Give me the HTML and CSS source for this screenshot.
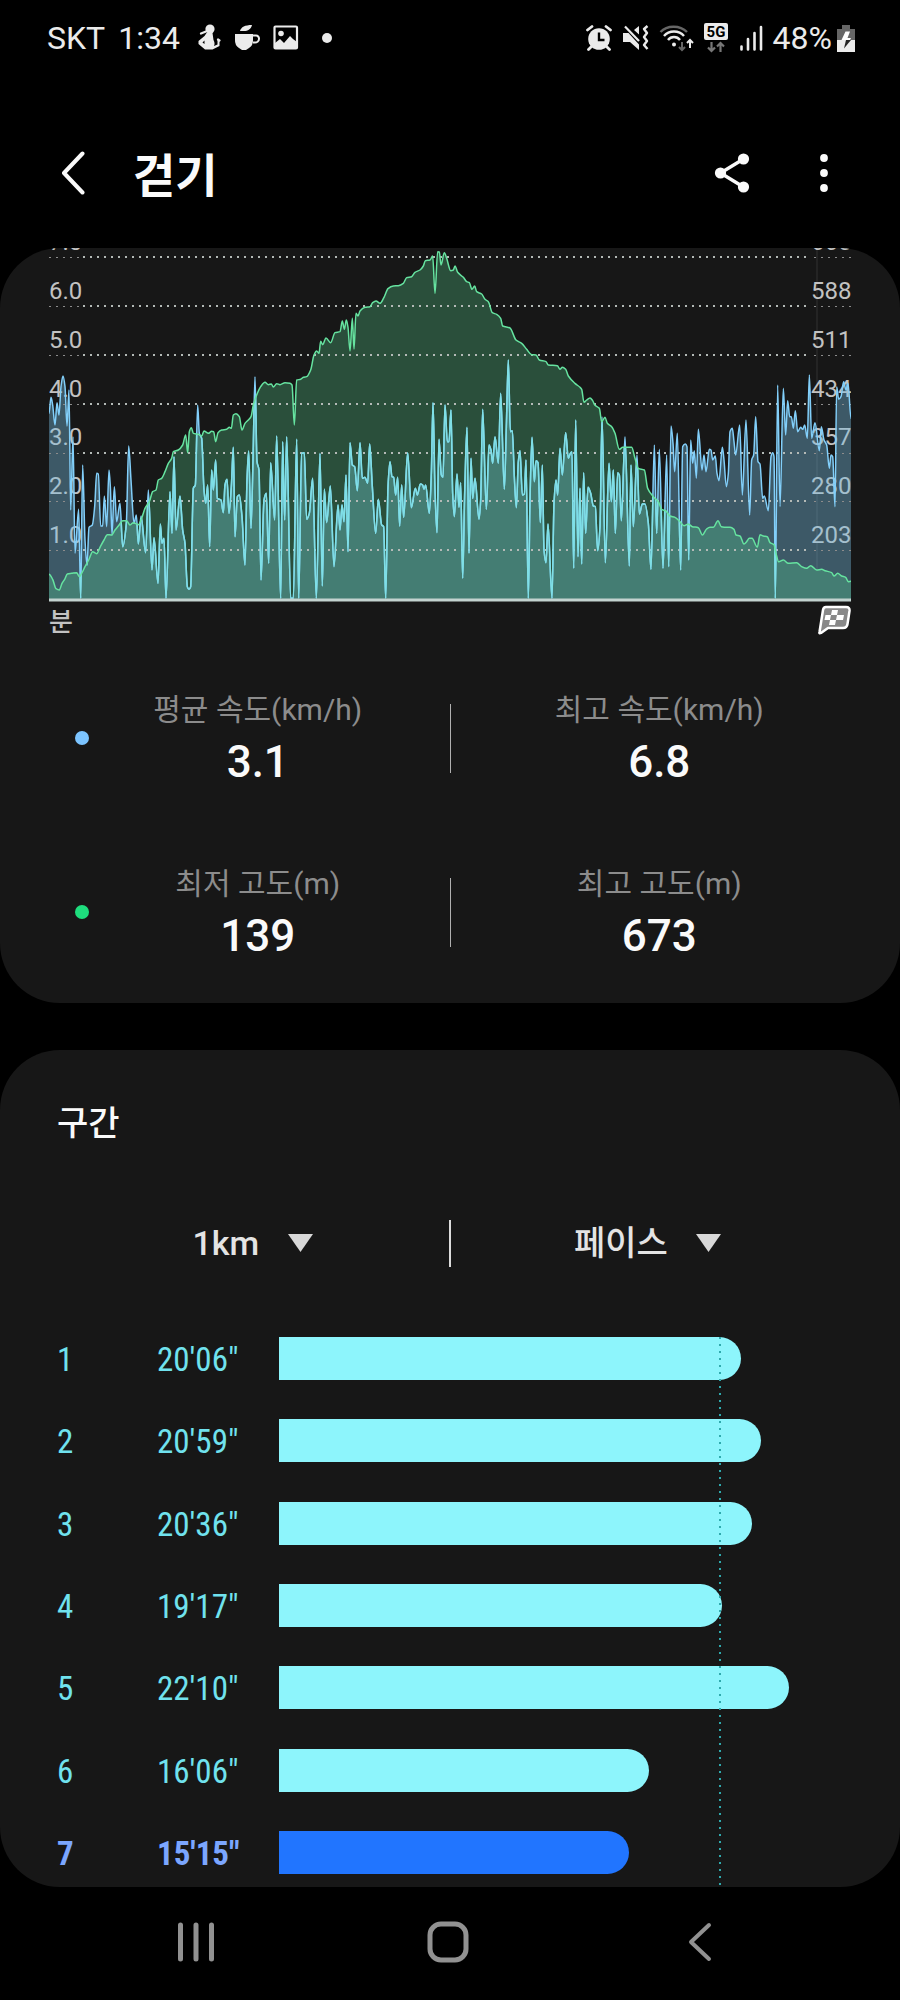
FILE: index.html
```html
<!DOCTYPE html>
<html lang="ko">
<head>
<meta charset="utf-8">
<meta name="viewport" content="width=device-width, initial-scale=1">
<title>걷기</title>
<link rel="stylesheet" href="styles.css">
</head>
<body>
<div class="status-bar">
  <div class="status-group status-left">
    <span>SKT</span>
    <span class="clock">1:34</span>
    <svg class="status-icon figure" viewBox="0 0 24 28" width="24" height="28" aria-hidden="true">
      <circle cx="13" cy="5" r="4.6" fill="currentColor"/>
      <path d="M9.500 9h6l1 7c1 2 1.500 4 .5 6l3.500-1.500V16h2v6l-7 3.500H8L1.500 20v-3l6-5z" fill="currentColor"/>
      <path d="M4 9.500 9 7.500M21 15.500l1.500 1" stroke="currentColor" stroke-width="2.200" stroke-linecap="round"/>
      <path d="M5.500 18.500l2-2v3.500z" fill="#000"/>
    </svg>
    <svg class="status-icon cup" viewBox="0 0 26 26" width="26" height="26" aria-hidden="true">
      <path d="M1 9h18v6a9 9 0 0 1-4 8l-3 2H8l-3-2a9 9 0 0 1-4-8zM6 6c1-4 5-6 12-6-1 4-4 6-8 6z" fill="currentColor"/>
      <path d="M18 10.500h4a3 3 0 0 1 3 3.200c0 2.300-2 3.800-4 3.800h-2" fill="none" stroke="currentColor" stroke-width="2"/>
    </svg>
    <svg class="status-icon photo" viewBox="0 0 26 26" width="26" height="26" aria-hidden="true">
      <rect x="1.500" y="1.500" width="22.500" height="22" rx="1" fill="none" stroke="currentColor" stroke-width="2.200"/>
      <circle cx="8" cy="8.500" r="2.800" fill="currentColor"/>
      <path d="M2 18l5-4 4 4 6-7 3 3 4 3v6H2z" fill="currentColor"/>
    </svg>
    <span class="more-dot"></span>
  </div>
  <div class="status-group">
    <svg class="status-icon" viewBox="0 0 26 26" width="26" height="26" aria-hidden="true">
      <circle cx="13" cy="14" r="10.800" fill="currentColor"/>
      <path d="M1.500 5 6 1.500M20 1.500 24.500 5M6 21l-3.500 3.500M20 21l3.500 3.500" stroke="currentColor" stroke-width="2.800" stroke-linecap="round"/>
      <path d="M13 7.500V15h5.500" fill="none" stroke="#000" stroke-width="2.400"/>
    </svg>
    <svg class="status-icon" viewBox="0 0 27 26" width="27" height="26" aria-hidden="true">
      <path d="M1 8h5.500L17 19.500V25L8 17H1zM12 5l5-4v8.500z" fill="currentColor"/>
      <path d="M3 1.500 17 16" stroke="currentColor" stroke-width="2.200"/>
      <path d="M25.500 1l-3.500 3 3 4-3 4 3 4-3 4 3.500 4" fill="none" stroke="currentColor" stroke-width="2.400" stroke-linejoin="round"/>
    </svg>
    <svg class="status-icon" viewBox="0 0 35 28" width="35" height="28" aria-hidden="true">
      <path d="M1.500 8C8 1 21 1 28 8" fill="none" stroke="#666" stroke-width="2.400"/>
      <path d="M5 12c5-6 15-6 20 0M9 16c3-4 9-4 12 0" fill="none" stroke="currentColor" stroke-width="2.400"/>
      <circle cx="15" cy="20.500" r="2" fill="currentColor"/>
      <path d="M23 18v8m-3-3 3 3 3-3" fill="none" stroke="#666" stroke-width="2"/>
      <path d="M31 24v-8m-3 3 3-3 3 3" fill="none" stroke="currentColor" stroke-width="2"/>
    </svg>
    <svg class="status-icon" viewBox="0 0 25 30" width="25" height="30" aria-hidden="true">
      <rect x="0" y="0" width="24" height="17" rx="2" fill="currentColor"/>
      <text x="12" y="14" class="network-text" text-anchor="middle">5G</text>
      <path d="M7.500 19v9m-3.500-3.500 3.500 3.500 3.500-3.500M16.500 29v-9m-3.500 3.500 3.500-3.500 3.500 3.500" fill="none" stroke="#777" stroke-width="2.200"/>
    </svg>
    <svg class="status-icon" viewBox="0 0 24 26" width="24" height="26" aria-hidden="true">
      <path d="M2.500 24.500v-3M9 24.500V14M15.500 24.500V8M22 24.500V2" stroke="currentColor" stroke-width="2.600" stroke-linecap="round"/>
    </svg>
    <span class="battery-level">48%</span>
    <svg class="status-icon battery" viewBox="0 0 18 27" width="18" height="27" aria-hidden="true">
      <path d="M5 0h8v4h5v12H0V4h5z" fill="#666"/>
      <path d="M0 15h18v12H0z" fill="currentColor"/>
      <path d="M8.500 6.500H13L10.500 13H14l-1 2H4.500z" fill="#fff"/>
      <path d="M9 15h5L7 23.500z" fill="#222"/>
    </svg>
  </div>
</div>

<header class="app-bar">
  <button class="icon-button" aria-label="뒤로">
    <svg viewBox="0 0 24 44" width="24" height="44"><path d="M21.500 2.500 3 22l18.500 19.500" fill="none" stroke="#fafafa" stroke-width="4" stroke-linecap="round" stroke-linejoin="round"/></svg>
  </button>
  <h1 class="title">걷기</h1>
  <button class="icon-button share" aria-label="공유">
    <svg viewBox="0 0 36 40" width="36" height="40"><g fill="#fafafa"><circle cx="6.500" cy="20" r="5.600"/><circle cx="29.500" cy="6" r="5.600"/><circle cx="29.500" cy="34" r="5.600"/></g><path d="M29.500 6l-23 14 23 14" fill="none" stroke="#fafafa" stroke-width="3.400"/></svg>
  </button>
  <button class="icon-button" aria-label="더보기">
    <svg viewBox="0 0 10 40" width="10" height="40"><g fill="#fafafa"><circle cx="5" cy="5" r="3.900"/><circle cx="5" cy="20" r="3.900"/><circle cx="5" cy="35" r="3.900"/></g></svg>
  </button>
</header>

<main class="content">
  <section class="card chart-card" aria-label="속도 및 고도">
    <svg class="chart" viewBox="0 0 802 354" role="img" aria-label="속도 및 고도 그래프">
      <defs><clipPath id="altitude-clip"><path class="altitude-area-clip"/></clipPath></defs>
      <path class="range-line" d="M768 0V322"/>
      <g class="axis-labels">
        <text x="0" y="2">7.0</text><text x="0" y="51">6.0</text><text x="0" y="100">5.0</text><text x="0" y="149">4.0</text><text x="0" y="197">3.0</text><text x="0" y="246">2.0</text><text x="0" y="295">1.0</text>
        <text x="762" y="2">665</text><text x="762" y="51">588</text><text x="762" y="100">511</text><text x="762" y="149">434</text><text x="762" y="197">357</text><text x="762" y="246">280</text><text x="762" y="295">203</text>
      </g>
      <path class="speed-area"/>
      <path class="altitude-area"/>
      <g class="grid-lines"></g>
      <path class="speed-line"/>
      <path class="speed-line speed-line-over" clip-path="url(#altitude-clip)"/>
      <path class="altitude-line"/>
      <path class="axis-line" d="M0 352H802"/>
    </svg>
    <div class="chart-footer">
      <span class="axis-unit">분</span>
      <svg viewBox="0 0 34 30" width="34" height="30" aria-hidden="true">
        <path d="M9 2h20q4 0 3.500 4l-2 13q-.5 4-4.500 4H11l-7 5q-2 1-1.500-1L6 5q.5-3 3-3z" fill="#888" stroke="#fff" stroke-width="2.500" stroke-linejoin="round"/>
        <path d="M15 5h6l-1 5h-6zM8.500 10H14l-1 5H7.500zM20 10h7l-1 5h-7zM13 15h6l-1 5h-6z" fill="#fff"/>
      </svg>
    </div>
    <div class="stats">
      <div class="stat-row">
        <span class="dot dot-speed"></span>
        <dl class="stat"><dt>평균 속도(km/h)</dt><dd>3.1</dd></dl>
        <span class="stat-divider"></span>
        <dl class="stat stat-end"><dt>최고 속도(km/h)</dt><dd>6.8</dd></dl>
      </div>
      <div class="stat-row">
        <span class="dot dot-altitude"></span>
        <dl class="stat"><dt>최저 고도(m)</dt><dd>139</dd></dl>
        <span class="stat-divider"></span>
        <dl class="stat stat-end"><dt>최고 고도(m)</dt><dd>673</dd></dl>
      </div>
    </div>
  </section>

  <section class="card splits-card">
    <h2 class="section-title">구간</h2>
    <div class="filters">
      <label class="filter"><select aria-label="구간 거리"><option>1km</option></select>
        <svg viewBox="0 0 25 18" width="25" height="18" aria-hidden="true"><path d="M0 0h25L12.500 18z" fill="#d8d8d8"/></svg></label>
      <span class="filter-divider"></span>
      <label class="filter"><select aria-label="표시 항목"><option>페이스</option></select>
        <svg viewBox="0 0 25 18" width="25" height="18" aria-hidden="true"><path d="M0 0h25L12.500 18z" fill="#d8d8d8"/></svg></label>
    </div>
    <div class="splits">
      <ol class="split-list">
        <li class="split"><span>1</span><span>20'06"</span><div class="track"><div class="bar" style="width:81.9%"></div></div></li>
        <li class="split"><span>2</span><span>20'59"</span><div class="track"><div class="bar" style="width:85.4%"></div></div></li>
        <li class="split"><span>3</span><span>20'36"</span><div class="track"><div class="bar" style="width:83.8%"></div></div></li>
        <li class="split"><span>4</span><span>19'17"</span><div class="track"><div class="bar" style="width:78.5%"></div></div></li>
        <li class="split"><span>5</span><span>22'10"</span><div class="track"><div class="bar" style="width:90.4%"></div></div></li>
        <li class="split"><span>6</span><span>16'06"</span><div class="track"><div class="bar" style="width:65.6%"></div></div></li>
        <li class="split split-best"><span>7</span><span>15'15"</span><div class="track"><div class="bar" style="width:62.1%"></div></div></li>
      </ol>
      <div class="average-overlay"><div class="average-line" style="width:78.3%"></div></div>
    </div>
  </section>
</main>

<nav class="nav-bar">
  <button class="nav-button" aria-label="최근 앱"><svg viewBox="0 0 44 44" width="44" height="44"><path d="M6.500 5v34M22 5v34M37.500 5v34" stroke="#919191" stroke-width="5" stroke-linecap="round"/></svg></button>
  <button class="nav-button" aria-label="홈"><svg viewBox="0 0 44 44" width="44" height="44"><rect x="4" y="4" width="36" height="36" rx="11" fill="none" stroke="#919191" stroke-width="5"/></svg></button>
  <button class="nav-button" aria-label="뒤로"><svg viewBox="0 0 44 44" width="44" height="44"><path d="M31 5 13 22l18 17" fill="none" stroke="#919191" stroke-width="4" stroke-linecap="round" stroke-linejoin="round"/></svg></button>
</nav>
<script src="chart.js"></script>
</body>
</html>
```
FILE: styles.css
```css
* {
  box-sizing: border-box;
}

body {
  margin: 0;
  min-height: 100vh;
  display: flex;
  flex-direction: column;
  background: #000;
  color: #fafafa;
  font-family: Roboto, "Noto Sans CJK KR", sans-serif;
}

button {
  border: 0;
  padding: 0;
  background: none;
  color: inherit;
  cursor: pointer;
}

svg {
  display: block;
}

/* Status bar */
.status-bar {
  display: flex;
  justify-content: space-between;
  align-items: center;
  height: 76px;
  padding: 0 45px 0 47px;
  color: #ebebeb;
  font-size: 32px;
  line-height: 40px;
}

.status-group {
  display: flex;
  align-items: center;
  gap: 10px;
}

.status-icon {
  flex: none;
}

.clock {
  margin-right: 4px;
}

.status-left {
  gap: 13px;
}

.more-dot {
  width: 10px;
  height: 10px;
  margin-left: 10px;
  border-radius: 50%;
  background: #ebebeb;
}

.network-text {
  font: 700 15px Roboto, sans-serif;
  fill: #000;
}

.battery-level {
  margin-right: -5px;
}

/* App bar */
.app-bar {
  display: flex;
  align-items: center;
  height: 172px;
  padding: 22px 71px 0 61px;
}

.icon-button {
  flex: none;
}

.title {
  margin: 0 auto 0 48px;
  padding-top: 6px;
  font-size: 46px;
  line-height: 64px;
  font-weight: 700;
}

.share {
  margin-right: 69px;
}

/* Cards */
.content {
  flex: 1;
  display: flex;
  flex-direction: column;
  gap: 47px;
}

.card {
  background: #171717;
  border-radius: 60px;
  overflow: hidden;
}

.chart-card {
  padding: 0 49px 41px;
}

/* Chart */
.chart {
  width: 100%;
  height: auto;
}

.axis-labels {
  font-size: 24px;
  fill: #c2c2c2;
}

.range-line {
  stroke: #333;
  fill: none;
}

.speed-area {
  fill: #78bee1;
  fill-opacity: 0.4;
}

.altitude-area {
  fill: #56d090;
  fill-opacity: 0.3;
}

.speed-line,
.altitude-line {
  fill: none;
  stroke-width: 1.5;
  stroke-linejoin: round;
}

.speed-line {
  stroke: #82cffa;
}

.speed-line-over {
  stroke: #7fe0e6;
}

.altitude-line {
  stroke: #66e3a0;
}

.grid-dots {
  stroke: #b4bab7;
  stroke-width: 2;
  stroke-dasharray: 2 5;
}

.grid-dots-edge {
  stroke: #8c8c8c;
  stroke-width: 1;
  stroke-dasharray: 2 5;
}

.axis-line {
  stroke: #c3d3d0;
  stroke-width: 3;
}

.chart-footer {
  display: flex;
  justify-content: space-between;
  align-items: center;
  height: 36px;
}

.axis-unit {
  padding-top: 4px;
  font-size: 26px;
  line-height: 36px;
  font-weight: 500;
  color: #c2c2c2;
}

/* Statistics */
.stats {
  display: grid;
  gap: 74px;
  padding-top: 50px;
}

.stat-row {
  display: grid;
  grid-template-columns: minmax(0, 384fr) 1px minmax(0, 418fr);
  align-items: center;
  margin: 0 -17px 0 17px;
}

.stat {
  grid-area: 1 / 1;
  margin: 0;
  text-align: center;
}

.stat-end {
  grid-area: 1 / 3;
}

.stat dt {
  font-size: 30px;
  line-height: 44px;
  color: #8c8c8c;
}

.stat dd {
  margin: 4px 0 0;
  font-size: 44px;
  line-height: 52px;
  font-weight: 500;
}

.stat-divider {
  grid-area: 1 / 2;
  height: 69px;
  background: #b0b0b0;
}

.dot {
  grid-area: 1 / 1;
  width: 14px;
  height: 14px;
  margin-left: 9px;
  border-radius: 50%;
}

.dot-speed {
  background: #7cc4ff;
}

.dot-altitude {
  background: #1edd7d;
}

/* Splits */
.splits-card {
  flex: 1;
  display: flex;
  flex-direction: column;
}

.section-title {
  margin: 0;
  padding: 48px 57px 0;
  font-size: 34px;
  line-height: 50px;
  font-weight: 500;
}

.filters {
  display: grid;
  grid-template-columns: minmax(0, 1fr) 2px minmax(0, 1fr);
  align-items: center;
  padding: 71px 56px 70px;
}

.filter {
  display: flex;
  align-items: center;
  justify-content: center;
  gap: 28px;
}

.filter select {
  appearance: none;
  border: 0;
  padding: 0;
  background: none;
  color: #e4e4e4;
  font: 500 34px/48px Roboto, "Noto Sans CJK KR", sans-serif;
}

.filter-divider {
  height: 47px;
  background: #dcdcdc;
}

.splits {
  position: relative;
  flex: 1;
  display: flex;
  flex-direction: column;
  padding: 0 57px 13px;
}

.split-list {
  flex: 1;
  display: flex;
  flex-direction: column;
  justify-content: space-between;
  gap: 16px;
  margin: 0;
  padding: 0;
  list-style: none;
}

.split {
  display: grid;
  grid-template-columns: 100px 122px minmax(0, 1fr);
  align-items: end;
  color: #70e2ee;
  font-family: "Roboto Condensed", Roboto, sans-serif;
  font-size: 33px;
  line-height: 40px;
}

.bar {
  height: 43px;
  border-radius: 0 22px 22px 0;
  background: #8df5fc;
}

.split-best {
  color: #7ba6ff;
  font-weight: 700;
}

.split-best .bar {
  background: #2175ff;
}

/* Average marker drawn across all of the bars */
.average-overlay {
  position: absolute;
  inset: 0 57px 0 279px;
  pointer-events: none;
}

.average-line {
  height: 100%;
  background: repeating-linear-gradient(#2fa9ad 0 2px, transparent 2px 7px) right / 2px 100% no-repeat;
}

/* Navigation */
.nav-bar {
  display: grid;
  grid-template-columns: repeat(3, 1fr);
  align-items: center;
  height: 113px;
  padding: 0 74px 3px 70px;
}

.nav-button {
  display: flex;
  justify-content: center;
}
```
FILE: chart.js
```js
// Samples as x,y pairs in thirds of a chart unit. Each run has its own x origin.
const altitude = [
  { origin: -57, points: "57,1003 68,1018 78,1046 88,1050 96,1030 104,1018 112,1002 125,1000 140,998 148,1010 156,998 165,980 176,960 188,935 200,941 210,922 222,900 232,884 245,885 255,870 265,858 278,842 290,842 300,855 310,848 325,854 335,835 345,805 358,785 368,755 378,750 385,720 395,715 405,695 415,670 425,655 430,635 445,630 458,615 467,585 473,638 478,575 484,563 490,580 505,583 515,588 522,573 535,580 545,574 551,575 557,605 564,578 575,570 590,568 598,562 604,565 610,525 618,521 628,530 636,570 645,550 655,540 663,530 670,495 680,465 692,440 705,427 715,434 724,432 730,441 740,431 750,434 765,428 780,430 786,435 793,555 800,420 812,418" },
  { origin: 753, points: "10,412 20,410 32,390 42,345 50,333 57,340 62,304 68,314 78,294 92,308 105,278 120,275 127,243 133,268 139,240 144,262 150,333 157,235 162,327 168,220 174,228 180,213 195,202 210,200 218,188 228,183 240,190 252,172 264,146 280,138 295,137 310,130 320,113 335,110 345,97 360,90 370,78 376,62 390,60 398,48 405,160 413,35 418,36 423,75 433,38 440,55 452,92 460,90 465,78 473,97 490,112 500,125 508,128 516,148 524,138 530,155 545,162 555,178 565,185 577,218 590,223 602,235 608,258 630,264 648,300 665,310 680,328 695,344 708,345 718,360 738,365 745,375 772,377 780,388 787,382 797,388 805,408 825,430 840,442" },
  { origin: 1593, points: "5,448 12,487 20,480 30,474 38,482 45,496 58,505 65,545 75,532 82,550 95,560 105,580 118,628 128,622 155,622 165,655 175,685 193,690 203,745 220,770 235,785 245,808 258,813 270,828 285,832 300,845 312,857 325,852 337,860 355,863 367,885 380,867 390,862 400,862 414,842 424,860 440,862 450,862 462,868 468,885 480,888 492,912 500,905 508,895 516,895 532,921 540,884 550,888 562,890 570,908 582,914 588,940 596,965 610,960 625,970 650,968 665,980 680,985 692,977 710,990 725,988 735,992 755,998 762,1008 773,1000 785,1008 797,1012 805,1025 813,1024" }
];

const speed = [
  { origin: -57, points: "57,520 63,472 68,495 75,555 81,488 87,525 93,440 99,408 105,440 111,558 117,450 122,810 129,590 135,940 146,808 152,1075 158,675 165,900 171,975 177,862 187,855 194,800 200,700 205,702 212,858 218,858 223,768 230,860 237,690 241,740 246,885 253,740 260,845 270,790 278,920 289,850 296,618 303,720 312,850 319,825 325,912 333,828 347,938 355,750 366,990 372,893 384,1030 391,852 396,910 402,895 408,1075 420,755 426,880 432,650 438,870 450,768 458,870 465,910 472,1040 477,1048 482,1040 490,745 496,735 503,495 508,580 515,595 522,750 527,790 533,735 539,920 545,690 550,750 557,660 562,775 573,780 580,818 585,735 591,718 597,820 604,740 610,622 615,890 622,770 628,765 636,830 645,975 651,720 656,633 663,865 669,660 675,410 681,665 687,690 693,1020 702,780 709,760 716,970 722,668 734,840 740,588 752,1075 758,605 764,840 770,590 782,1075 790,1075 800,598 806,1075" },
  { origin: 753, points: "5,640 13,638 20,838 28,820 38,715 49,1075 60,640 67,1038 73,748 80,848 91,738 102,980 114,795 120,870 126,795 132,845 138,705 144,935 150,608 157,675 164,680 172,752 180,608 187,715 195,712 203,730 209,612 217,740 227,880 235,778 245,855 251,860 257,1075 264,740 270,665 276,710 281,712 287,765 293,712 299,858 305,735 311,832 323,638 334,803 346,745 352,765 361,732 368,735 372,748 377,735 388,820 394,700 399,488 405,750 411,878 417,598 424,705 429,712 435,495 442,605 447,605 453,510 458,760 463,830 471,702 477,802 482,728 488,1015 494,760 501,562 507,940 513,655 518,775 525,715 537,838 542,780 548,508 559,808 567,615 573,630 578,670 585,590 595,670 602,460 613,748 619,560 625,360 631,575 637,572 643,710 649,803 655,665 660,632 667,765 673,762 678,660 685,1075 690,780 696,592 703,725 708,662 714,668 721,848 727,675 732,930 738,968 744,852 756,1075 762,790 768,720 773,765 780,625 787,705 797,578 805,655 811,640 816,635 821,985 827,540 834,950 840,745" },
  { origin: 1593, points: "5,972 11,698 17,880 24,742 32,760 40,798 46,800 53,932 60,860 66,530 76,968 87,670 94,785 100,690 106,880 113,698 118,705 124,842 135,590 148,978 153,675 160,860 171,645 178,822 187,792 195,792 205,850 213,988 223,615 230,880 238,628 249,985 260,645 266,980 273,558 279,610 284,695 292,580 302,990 308,620 316,612 321,620 326,960 332,600 338,670 343,632 349,715 355,568 366,690 372,645 378,695 388,628 393,630 398,660 406,648 411,700 417,722 427,622 432,660 439,740 445,700 450,575 457,565 462,605 467,645 479,555 487,765 498,540 509,825 515,660 521,645 527,530 534,665 540,672 548,775 553,768 565,812 573,650 578,638 582,650 586,1075 593,435 600,800 610,445 617,585 623,482 629,530 634,530 640,565 646,512 653,575 662,562 668,568 674,555 682,595 688,405 695,595 705,548 718,632 724,560 732,600 740,615 748,685 753,645 758,650 765,800 770,440 776,478 783,470 791,425 798,450 804,430 813,535" }
];

const BASE = 352;
const WIDTH = 802;
const TOP = 24;

function toPoints(runs) {
  return runs.flatMap(run => run.points.split(" ").map(pair => {
    const [x, y] = pair.split(",").map(Number);
    return [(x + run.origin) / 3, (y - TOP) / 3];
  }));
}

// Smooth curve that never overshoots a peak or a trough.
function curve(points) {
  const slope = i => (points[i + 1][1] - points[i][1]) / (points[i + 1][0] - points[i][0]);
  const tangent = points.map((p, i) => {
    if (i === 0 || i === points.length - 1) return 0;
    const before = slope(i - 1);
    const after = slope(i);
    return before * after <= 0 ? 0 : 2 * before * after / (before + after);
  });
  let d = `M${points[0][0]} ${points[0][1]}`;
  for (let i = 1; i < points.length; i++) {
    const [x0, y0] = points[i - 1];
    const [x1, y1] = points[i];
    const h = (x1 - x0) / 3;
    d += `C${x0 + h} ${y0 + tangent[i - 1] * h} ${x1 - h} ${y1 - tangent[i] * h} ${x1} ${y1}`;
  }
  return d;
}

function draw(selector, d) {
  document.querySelectorAll(selector).forEach(path => path.setAttribute("d", d));
}

const altitudePath = curve(toPoints(altitude));
const speedPath = curve(toPoints(speed));
const close = `V${BASE}H0Z`;
draw(".altitude-line", altitudePath);
draw(".altitude-area, .altitude-area-clip", altitudePath + close);
draw(".speed-line", speedPath);
draw(".speed-area", speedPath + close);

const grid = document.querySelector(".grid-lines");
function gridLine(className, x0, x1, y) {
  const line = document.createElementNS("http://www.w3.org/2000/svg", "path");
  line.setAttribute("class", className);
  line.setAttribute("d", `M${x0} ${y}H${x1}`);
  grid.append(line);
}
for (let step = 1; step <= 7; step++) {
  const y = Math.round(BASE - 1 - step * 48.8);
  gridLine("grid-dots", 34, 762, y);
  gridLine("grid-dots-edge", 0, 32, y + 0.5);
  gridLine("grid-dots-edge", 765, WIDTH, y + 0.5);
}
```
